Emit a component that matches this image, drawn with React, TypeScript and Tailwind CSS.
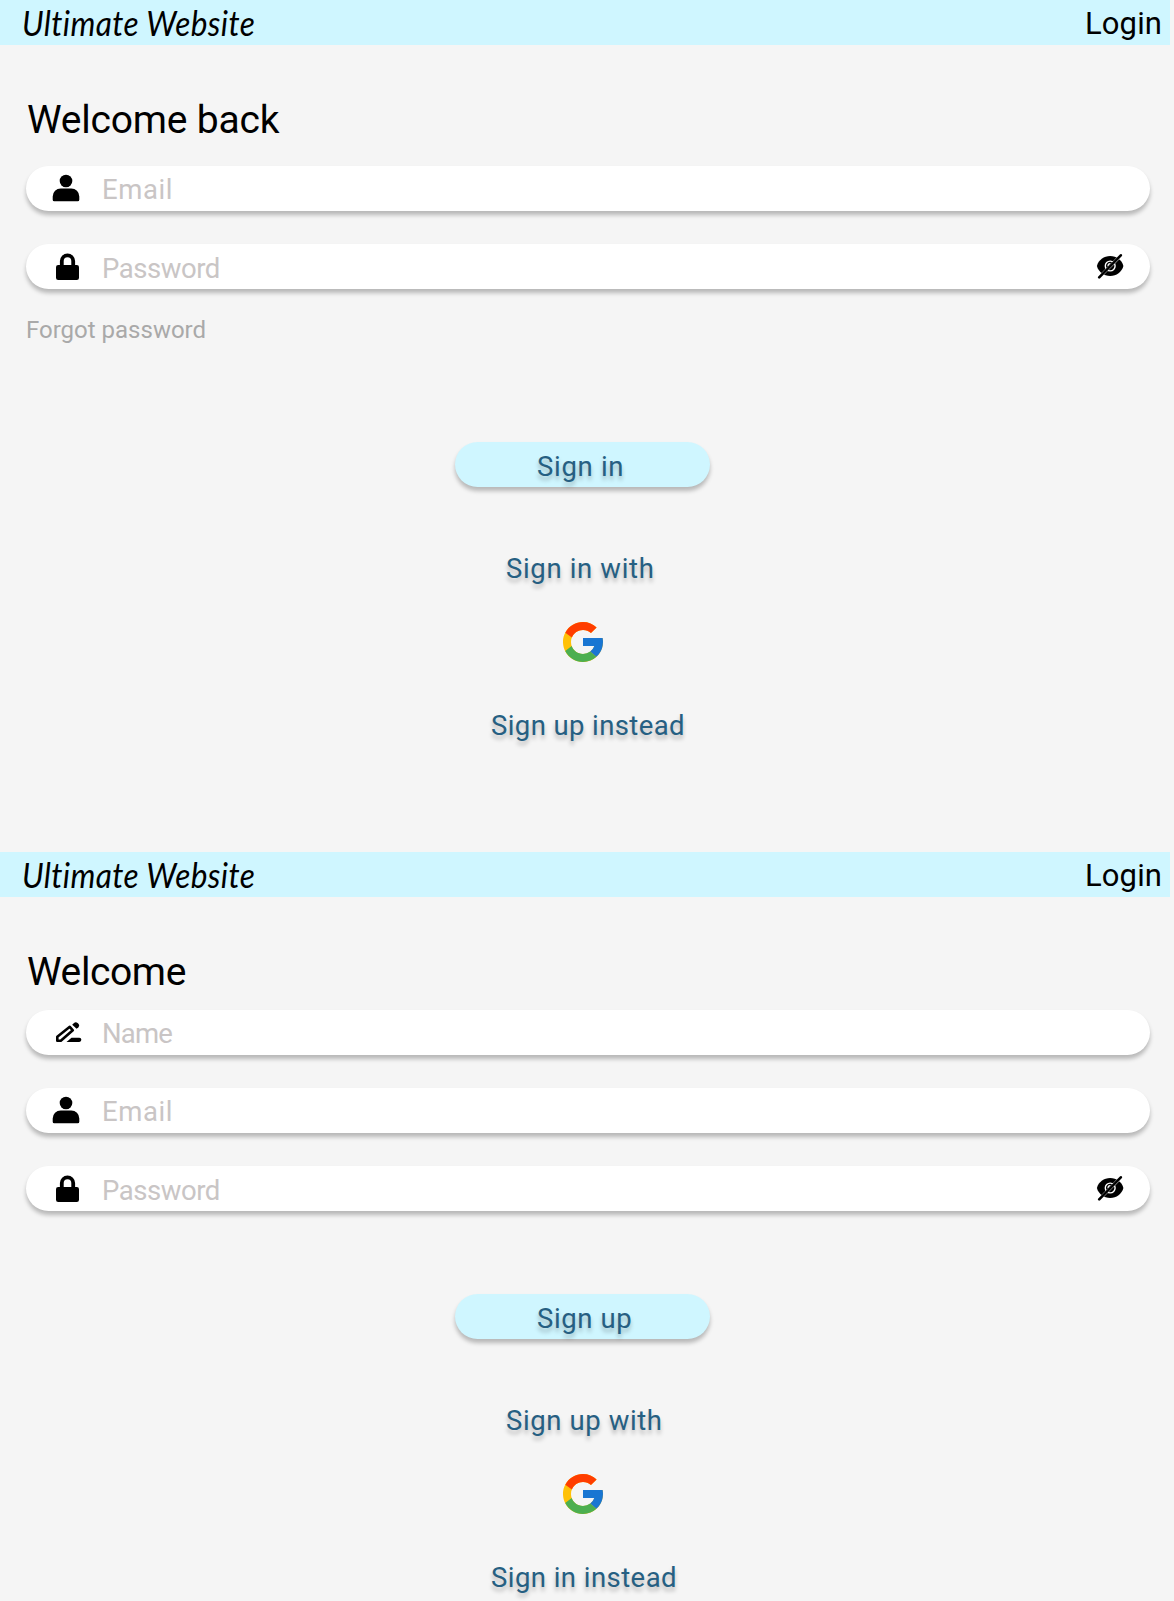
import type { ReactNode } from 'react';

function UserIcon() {
  return (
    <svg className="mb-[2px] ml-[26px] h-[28px] w-[28px]" viewBox="0 0 28 28">
      <circle cx="14" cy="7" r="6.3" />
      <path d="M.7 22.5a8 8 0 0 1 8-8h10.6a8 8 0 0 1 8 8v3.2a1.6 1.6 0 0 1-1.6 1.6H2.3a1.6 1.6 0 0 1-1.6-1.6z" />
    </svg>
  );
}

function LockIcon() {
  return (
    <svg className="mt-[1px] ml-[28px] h-[28px] w-[26px]" viewBox="0 0 26 28">
      <path d="M7.8 13V8a5.700 5.700 0 0 1 11.400 0V13" fill="none" stroke="#000" strokeWidth="3.800" />
      <rect x="2" y="12" width="23" height="15" rx="2.200" />
    </svg>
  );
}

function PencilIcon() {
  return (
    <svg className="mb-[1px] ml-[29px] h-[22px] w-[28px]" viewBox="0 0 28 22">
      <path d="M2.3 19.7v-4L14.800 5.800l3 3.500-12 10.400z" fill="none" stroke="#000" strokeWidth="2.600" strokeLinejoin="round" />
      <path d="M17.200 3.700 19 2c1.200-1.100 2.400-1 3.600 0l.8.8c1.100 1.200 1 2.300 0 3.400l-1.800 1.600z" />
      <path d="m11.500 20.900 5-4.100h7.800a2 2 0 0 1 0 4.100z" />
    </svg>
  );
}

function EyeOffIcon() {
  return (
    <svg className="mr-[26px] mb-[2px] ml-auto h-[26px] w-[28px]" viewBox="0 0 28 26">
      <path d="M.9 13C2.400 7 8 3.100 14.200 3.100S25.900 7 27.400 13C25.900 19 20.400 23 14.200 23S2.400 19 .9 13z" />
      <circle cx="14.200" cy="13" r="4.900" fill="none" stroke="#fff" strokeWidth="1.400" />
      <path d="M12 13a2.300 2.300 0 0 1 2.300-2.300" fill="none" stroke="#fff" strokeWidth="1.200" />
      <path d="M2 23.500 23.800 1.300l2.500 1.900L4.500 25.300z" fill="#fff" />
      <path d="M3.200 24.300 24.800 2.300" stroke="#000" strokeWidth="2.600" strokeLinecap="round" />
    </svg>
  );
}

function GoogleIcon() {
  return (
    <svg className="mt-[33px] ml-[563px] h-10 w-10" viewBox="4 4 40 40">
      <path fill="#FFC107" d="M43.611 20.083H42V20H24v8h11.303c-1.649 4.657-6.080 8-11.303 8-6.627 0-12-5.373-12-12s5.373-12 12-12c3.059 0 5.842 1.154 7.961 3.039l5.657-5.657C34.046 6.053 29.268 4 24 4 12.955 4 4 12.955 4 24s8.955 20 20 20 20-8.955 20-20c0-1.341-.138-2.650-.389-3.917z" />
      <path fill="#FF3D00" d="m6.306 14.691 6.571 4.819C14.655 15.108 18.961 12 24 12c3.059 0 5.842 1.154 7.961 3.039l5.657-5.657C34.046 6.053 29.268 4 24 4 16.318 4 9.656 8.337 6.306 14.691z" />
      <path fill="#4CAF50" d="M24 44c5.166 0 9.860-1.977 13.409-5.192l-6.190-5.238A11.910 11.910 0 0 1 24 36c-5.202 0-9.619-3.317-11.283-7.946l-6.522 5.025C9.505 39.556 16.227 44 24 44z" />
      <path fill="#1976D2" d="M43.611 20.083H42V20H24v8h11.303a12.040 12.040 0 0 1-4.087 5.571l6.193 5.238C36.971 39.205 44 34 44 24c0-1.341-.138-2.650-.389-3.917z" />
    </svg>
  );
}

function Header() {
  return (
    <header className="flex h-[45px] w-[1170px] items-center bg-[#cff6ff] text-black">
      <div className="ml-[22px] origin-left scale-x-[0.93] font-['Lato'] text-[34px] leading-[44px] tracking-[0.4px] whitespace-nowrap italic [font-variant-ligatures:none]">
        Ultimate Website
      </div>
      <div className="mr-[8px] ml-auto pt-[2px] text-[31px] leading-[43px] tracking-[0.1px]">Login</div>
    </header>
  );
}

function Field({ icon, label, labelClass, trailing }: { icon: ReactNode; label: string; labelClass: string; trailing?: ReactNode }) {
  return (
    <div className="flex h-[45px] w-[1124px] items-center rounded-full bg-white shadow-[0_4px_4px_rgba(0,0,0,0.25)]">
      <div className="flex w-[76px] shrink-0 items-center">{icon}</div>
      <span className={`text-[27.5px] leading-[43px] text-[#c9c5c5] ${labelClass}`}>{label}</span>
      {trailing}
    </div>
  );
}

const link = 'h-10 text-[27.5px] leading-10 text-[#265f82] [text-shadow:0_4px_4px_rgba(0,0,0,0.25)]';

export default function App() {
  return (
    <div className="h-[1601px] w-[1174px] overflow-hidden bg-[#f5f5f5] font-['Roboto',sans-serif] whitespace-nowrap">
      <section className="h-[852px]">
        <Header />
        <h1 className="mt-[45px] ml-[27px] h-[60px] text-[39px] leading-[60px] tracking-[-0.2px]">Welcome back</h1>
        <div className="mt-4 ml-[26px] flex flex-col gap-[33px]">
          <Field icon={<UserIcon />} label="Email" labelClass="pt-[2px] tracking-[0.6px]" />
          <Field icon={<LockIcon />} label="Password" labelClass="pt-[3px] tracking-[-0.45px]" trailing={<EyeOffIcon />} />
        </div>
        <div className="mt-[26px] ml-[26px] h-[30px] text-[24px] leading-[30px] text-[#a9a9a9]">Forgot password</div>
        <button className="mt-[97px] ml-[455px] block h-[45px] w-[255px] rounded-full bg-[#cff6ff] pt-1 pl-[82px] text-left text-[27.5px] leading-[41px] tracking-[0.7px] text-[#265f82] shadow-[0_4px_4px_rgba(0,0,0,0.25)] [text-shadow:0_4px_4px_rgba(0,0,0,0.25)]">
          Sign in
        </button>
        <div className={`mt-[62px] ml-[506px] tracking-[0.65px] ${link}`}>Sign in with</div>
        <GoogleIcon />
        <div className={`mt-[44px] ml-[491px] tracking-[0.4px] ${link}`}>Sign up instead</div>
      </section>
      <section>
        <Header />
        <h1 className="mt-[45px] ml-[27px] h-[60px] text-[39px] leading-[60px] tracking-[-0.4px]">Welcome</h1>
        <div className="mt-2 ml-[26px] flex flex-col gap-[33px]">
          <Field icon={<PencilIcon />} label="Name" labelClass="pt-[2px] tracking-[-0.8px]" />
          <Field icon={<UserIcon />} label="Email" labelClass="pt-[2px] tracking-[0.6px]" />
          <Field icon={<LockIcon />} label="Password" labelClass="pt-[3px] tracking-[-0.45px]" trailing={<EyeOffIcon />} />
        </div>
        <button className="mt-[83px] ml-[455px] block h-[45px] w-[255px] rounded-full bg-[#cff6ff] pt-1 pl-[82px] text-left text-[27.5px] leading-[41px] tracking-[0.6px] text-[#265f82] shadow-[0_4px_4px_rgba(0,0,0,0.25)] [text-shadow:0_4px_4px_rgba(0,0,0,0.25)]">
          Sign up
        </button>
        <div className={`mt-[62px] ml-[506px] tracking-[0.6px] ${link}`}>Sign up with</div>
        <GoogleIcon />
        <div className={`mt-[44px] ml-[491px] tracking-[0.45px] ${link}`}>Sign in instead</div>
      </section>
    </div>
  );
}
